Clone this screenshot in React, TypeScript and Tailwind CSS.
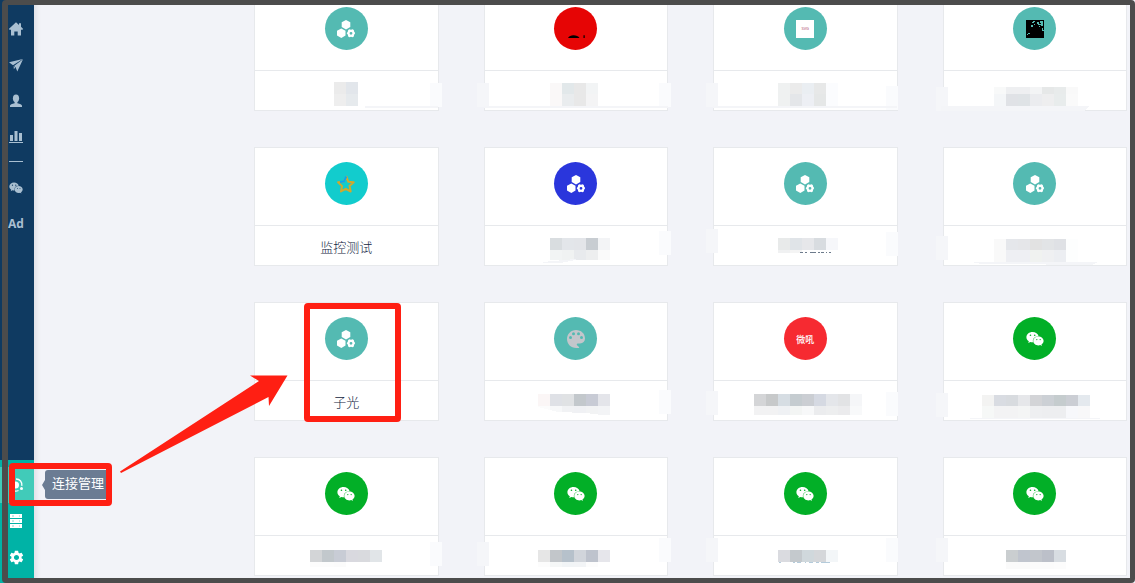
import type { ReactNode } from "react";
import { FaWeixin } from "react-icons/fa";
import { MdSettings } from "react-icons/md";

type Row = { y: number; h: number; cells: string[] };
type Mosaic = { x: number; rows: Row[]; extra?: ReactNode; left?: string; right?: string };
type Connection = { label?: string; color: string; icon: ReactNode; mosaic?: Mosaic; marked?: boolean };

function HexIcon() {
  return (
    <svg width="18" height="18" viewBox="0 0 18 18" fill="#fff">
      <path d="M9 0l4.3 2.3v4.8L9 9.5 4.7 7.1V2.3z" />
      <path d="M4.3 8.5l4.2 2.3v4.8l-4.2 2.3L0 15.6v-4.8z" />
      <path
        fillRule="evenodd"
        d="M12.4 9.2l1.600.6 1.600-.6 1.200.7.3 1.700 1.200 1.600-1.200 1.600-.3 1.800-1.200.7-1.600-.6-1.600.6-1.200-.7-.3-1.800-1.200-1.600 1.200-1.600.3-1.700zM14 11.900a1.400 1.400 0 100 2.800 1.400 1.400 0 000-2.800z"
      />
    </svg>
  );
}

function ArcIcon() {
  return (
    <svg width="18" height="18" viewBox="0 0 18 18">
      <path d="M1 18c1-1.8 3-2.7 5.5-2.7S11.500 16.200 12.500 18z" fill="#000" />
      <path d="M16.500 15.200h1.200V18h-1.200z" fill="#000" />
    </svg>
  );
}

function StarIcon() {
  return (
    <svg width="18" height="18" viewBox="0 0 18 18" fill="none" strokeWidth="2" strokeLinejoin="round">
      <path d="M9.500 1.800l1.700 4.900 5.500.6-4.200 3.600 1.200 5.600-4.900-2.700-4.800 2.600 1-5.300-3.900-3.800 5.400-.6z" stroke="#d3a82c" />
      <path d="M9.300 1.500L6.800 6.600 3 7.100" stroke="#0aa5f5" />
    </svg>
  );
}

function NoiseIcon() {
  return (
    <svg width="18" height="18" viewBox="0 0 18 18" shapeRendering="crispEdges">
      <path d="M0 0h18v18H0z" fill="#000" />
      <path
        d="M6 2h2v1H6zM7 1h2v1H7zM5 5h2v2H5zM8 4h1v1H8zM11 2h2v2h-2zM12 4h3v1h-3zM14 1h3v2h-3zM15 3h2v3h-2zM13 6h1v1h-1zM16 8h1v3h-1zM1 14h1v1H1zM2 13h2v1H2zM17 10h1v1h-1z"
        fill="#54bab2"
      />
    </svg>
  );
}

function PaletteIcon() {
  return (
    <svg width="18" height="18" viewBox="0 0 18 18">
      <path
        d="M9 0C3.900 0 0 4 0 9s3.900 9 9.200 9h3.100c-.2-1.300-1.200-2-2-2.600-.8-.7-.7-1.900.5-2h2.200c3 0 5-1.800 5-4.900C18 3.500 14 0 9 0z"
        fill="#c3c6cb"
      />
      <g fill="#54bab2">
        <circle cx="3.500" cy="7.600" r="1.500" />
        <circle cx="6.500" cy="3.700" r="1.500" />
        <circle cx="11.500" cy="3.700" r="1.500" />
        <circle cx="14.500" cy="7.600" r="1.500" />
      </g>
    </svg>
  );
}

function HomeIcon() {
  return (
    <svg width="16" height="16" viewBox="0 0 16 16" fill="currentColor">
      <path d="M8 1.300l3 2.700V2.200h2v3.600l2.200 2.100-.8.900H13v5.700H9.700v-4H6.300v4H3V8.800H1.600l-.8-.9z" />
    </svg>
  );
}

function PlaneIcon() {
  return (
    <svg width="16" height="16" viewBox="0 0 16 16" fill="currentColor">
      <path d="M1 5.200L14.800 2 5 8.200z" />
      <path d="M15 2.300L9.300 14.600 7.700 10.500 6 9z" />
      <path d="M5.600 9.100l1.500 1.300-1.200 1.800z" />
    </svg>
  );
}

function PersonIcon() {
  return (
    <svg width="16" height="16" viewBox="0 0 16 16" fill="currentColor">
      <ellipse cx="8" cy="5.300" rx="3.100" ry="3.900" />
      <path d="M6.600 8h2.800v2.200c2.600.4 4.600 1.200 4.600 2.600v1.200H2v-1.200c0-1.400 2-2.200 4.600-2.600z" />
    </svg>
  );
}

function ChartIcon() {
  return (
    <svg width="16" height="16" viewBox="0 0 16 16" fill="currentColor">
      <path d="M2 6h3v6H2zM6.500 2h3v10h-3zM11 4h3v8h-3zM1 13h14v1H1z" />
    </svg>
  );
}

function ServerIcon() {
  return (
    <svg width="16" height="16" viewBox="0 0 16 16">
      <path d="M2 1h12v4H2zM2 6h12v4H2zM2 11h12v4H2z" fill="currentColor" />
      <path d="M4 3h2M4 8h2M4 13h2M11 3h1M11 8h1M11 13h1" stroke="#00b3a6" strokeOpacity="0.5" />
    </svg>
  );
}

function ConnectIcon() {
  return (
    <svg width="18" height="18" viewBox="0 0 18 18" fill="none" stroke="currentColor" strokeWidth="1.300">
      <circle cx="8.500" cy="9" r="3.500" fill="currentColor" stroke="none" />
      <path d="M9 3c4 0 6.300 3 5.800 6.800M11.500 14.500c-4 1.800-8.500-.5-8.800-5" />
      <circle cx="14.500" cy="12.500" r="1.500" fill="currentColor" stroke="none" />
    </svg>
  );
}

const hex = <HexIcon />;
const wechat = <FaWeixin size={18} color="#fff" />;

const strip = (x: number, y: number, w: number, h: number) => <rect x={x} y={y} width={w} height={h} fill="#f4f5f8" />;

const connections: Connection[] = [
  {
    color: "bg-[#54bab2]",
    icon: hex,
    mosaic: {
      x: 80,
      rows: [
        { y: 11, h: 12, cells: ["#ebebeb", "#e2e6eb"] },
        { y: 23, h: 12, cells: ["#eeeeee", "#e6eaed"] },
      ],
      extra: strip(111, 35, 73, 2),
      right: "top-[12px] -right-1",
    },
  },
  {
    color: "bg-[#e60505]",
    icon: <ArcIcon />,
    mosaic: {
      x: 66,
      rows: [
        { y: 12, h: 11, cells: ["#faf8f8", "#e2e8ea", "#e8e8e8", "#f2f4f5"] },
        { y: 23, h: 12, cells: ["#faf8f8", "#e9ecee", "#e8e8e8", "#f4f4f5"] },
      ],
      extra: strip(0, 35, 184, 2),
      left: "top-[12px]",
      right: "top-[12px] -right-1",
    },
  },
  {
    color: "bg-[#54bab2]",
    icon: (
      <span className="flex size-[18px] items-center justify-center bg-white text-[4px] leading-none text-[#a83a62]">SVG</span>
    ),
    mosaic: {
      x: 65,
      rows: [
        { y: 12, h: 11, cells: ["#eff1f1", "#ebebeb", "#eaeef2", "#e7e8e8", "#fbfcfe"] },
        { y: 23, h: 12, cells: ["#eff1f1", "#e4e6e9", "#edeff4", "#e5e7e7", "#fbfcfe"] },
      ],
      extra: strip(0, 35, 184, 2),
      left: "top-[12px]",
      right: "top-[15px] -right-px",
    },
  },
  {
    color: "bg-[#54bab2]",
    icon: <NoiseIcon />,
    mosaic: {
      x: 51,
      rows: [
        { y: 16, h: 7, cells: ["#f8f9f9", "#eeeff1", "#eeeff1", "#f3f4f5", "#e6e8e8", "#e8ebeb", "#f9f9f9"] },
        { y: 23, h: 12, cells: ["#f4f6f8", "#e0e2e6", "#dfe3e6", "#ebecef", "#eeeeef", "#e8ecec", "#fafafa"] },
      ],
      extra: <path d="M-2 35h148l-5 5H-2z" fill="#f4f5f8" />,
      left: "top-[16px]",
    },
  },
  { label: "监控测试", color: "bg-[#12cccd]", icon: <StarIcon /> },
  {
    color: "bg-[#2a36dc]",
    icon: hex,
    mosaic: {
      x: 66,
      rows: [
        { y: 12, h: 12, cells: ["#d9dde0", "#e3e6ea", "#e3e5e9", "#c8cdd2", "#f3f4f6"] },
        { y: 24, h: 10, cells: ["#f2f4f4", "#f0f2f2", "#e8eaed", "#edeeef", "#fafafa"] },
      ],
      extra: <path d="M58 36l34-3v1l-16 3H60z" fill="#f4f5f8" />,
      right: "top-[5px] -right-1",
    },
  },
  {
    color: "bg-[#54bab2]",
    icon: hex,
    mosaic: {
      x: 65,
      rows: [
        { y: 12, h: 12, cells: ["#e8eaea", "#e0e4e8", "#e6e7ea", "#d8dce0", "#f6f7fa"] },
        { y: 24, h: 3, cells: ["#f0f1f2", "#f4f4f4"] },
      ],
      extra: <path d="M87 26.500h3m2 0h2m3 0h6m2 0h2m1 0h3m2 0h1m2 0h2" stroke="#6d7b8c" />,
      left: "top-[3px]",
      right: "top-[6px] -right-px",
    },
  },
  {
    color: "bg-[#54bab2]",
    icon: hex,
    mosaic: {
      x: 51,
      rows: [
        { y: 13, h: 11, cells: ["#f9f9f9", "#e5e7eb", "#e5e6e9", "#e2e2e2", "#e2e4e6", "#dfe1e5", "#fdfefe"] },
        { y: 24, h: 12, cells: ["#f9f9f9", "#eeeff3", "#eeeff3", "#f0f2f0", "#eff0f2", "#eceef2", "#fdfefe"] },
      ],
      extra: <path d="M29 36h126l-6 3H115l-25-1H38z" fill="#f4f5f8" />,
      left: "top-[10px]",
    },
  },
  { label: "子光", color: "bg-[#54bab2]", icon: hex, marked: true },
  {
    color: "bg-[#54bab2]",
    icon: <PaletteIcon />,
    mosaic: {
      x: 54,
      rows: [
        { y: 13, h: 12, cells: ["#fbf6f6", "#dfe1e6", "#e0e2e4", "#c3c8cc", "#c8cbd5", "#e4e5ea"] },
        { y: 25, h: 9, cells: ["#fcfcfc", "#f7f8f9", "#f1f2f4", "#f0f1f4", "#f2f3f4", "#f3f4f6"] },
      ],
      extra: <path d="M54 26l20 5 28 1 24 3H54z" fill="#fff" />,
      right: "top-[9px] -right-1",
    },
  },
  {
    color: "bg-[#f62a31]",
    icon: <span className="pt-[2px] text-[9px] leading-none font-medium text-white">微吼</span>,
    mosaic: {
      x: 41,
      rows: [
        { y: 13, h: 12, cells: ["#d4d5d7", "#c7c9ca", "#d6dde3", "#c5ccd0", "#cbced3", "#d5d9e2", "#e4e6ea", "#e2e3e5", "#f5f6f8"] },
        { y: 25, h: 9, cells: ["#f2f2f3", "#f2f2f3", "#eff1f4", "#f3f5f4", "#f7f8f9", "#ebecee", "#edeeef", "#ebebed", "#f8f9fa"] },
      ],
      left: "top-[10px]",
      right: "top-[11px] -right-px",
    },
  },
  {
    color: "bg-[#02af27]",
    icon: wechat,
    mosaic: {
      x: 39,
      rows: [
        { y: 14, h: 11, cells: ["#f3f3f2", "#d9dce2", "#d8dbdf", "#e6e7ea", "#d3d4d7", "#ccd0d5", "#c5ccce", "#cbced4", "#e4e9ee"] },
        { y: 25, h: 12, cells: ["#f6f8f7", "#f3f3f4", "#f3f3f4", "#f4f5f5", "#eeeff1", "#edeef0", "#edeef0", "#f7f8fb", "#f8f8f9"] },
      ],
      extra: strip(27, 37, 130, 1),
      left: "top-[12px]",
    },
  },
  {
    color: "bg-[#02af27]",
    icon: wechat,
    mosaic: {
      x: 56,
      rows: [
        { y: 14, h: 12, cells: ["#d3d5d7", "#c2c8cc", "#c8ccd5", "#d9d9df", "#d9dade", "#e1e5e8"] },
        { y: 26, h: 5, cells: ["#fcfcfc", "#fcfcfc", "#fbfbfb"] },
      ],
      right: "top-[6px] -right-1",
    },
  },
  {
    color: "bg-[#02af27]",
    icon: wechat,
    mosaic: {
      x: 54,
      rows: [
        { y: 14, h: 12, cells: ["#e6e6e6", "#c2c6ca", "#b6c1cb", "#d1d5db", "#bec3cd", "#e6e6eb"] },
        { y: 26, h: 5, cells: ["#fcfcfc", "#f5f7f7", "#f1f4f6", "#f2f4f6", "#fcfcfc"] },
      ],
      left: "top-[6px]",
      right: "top-[2px] -right-1",
    },
  },
  {
    color: "bg-[#02af27]",
    icon: wechat,
    mosaic: {
      x: 65,
      rows: [{ y: 14, h: 12, cells: ["#dadbe0", "#c4c9cd", "#d0d8dc", "#d5d7da", "#f3f6f8"] }],
      extra: <path d="M66 26.500h2m12 0h2m2 0h4m4 0h1m3 0h4m3 0h3m2 0h9" stroke="#b4cbdb" />,
      left: "top-[2px]",
      right: "top-[2px] -right-px",
    },
  },
  {
    color: "bg-[#02af27]",
    icon: wechat,
    mosaic: {
      x: 63,
      rows: [
        { y: 14, h: 12, cells: ["#caced0", "#c0c5ce", "#c2c6cc", "#bcc0c9", "#d8dde2"] },
        { y: 26, h: 7, cells: ["#fafafa", "#fafafa", "#fbfbfb", "#fbfbfb", "#fcfcfc"] },
      ],
      left: "top-[2px]",
    },
  },
];

function MosaicName({ x, rows, extra, left, right }: Mosaic) {
  return (
    <>
      {left && <span className={`absolute -left-2 h-6 w-3 bg-[#f5f6f9] ${left}`} />}
      {right && <span className={`absolute h-6 w-3 bg-[#fafbfd] ${right}`} />}
      <svg className="relative shrink-0 overflow-visible" width="184" height="40" viewBox="0 0 184 40" shapeRendering="crispEdges">
        {rows.map((row) =>
          row.cells.map((fill, i) => (
            <rect key={`${row.y}-${i}`} x={x + i * 12} y={row.y} width="12" height={row.h} fill={fill} />
          )),
        )}
        {extra}
      </svg>
    </>
  );
}

function Card({ label, color, icon, mosaic, marked }: Connection) {
  return (
    <article className="relative flex h-[119px] flex-col border border-[#e7e9ec] bg-white">
      <div className="flex h-[78px] shrink-0 justify-center border-b border-[#e7e9ec] pt-[14px]">
        <div className={`flex size-[43px] items-center justify-center rounded-full ${color}`}>{icon}</div>
      </div>
      <div className="relative flex min-h-0 flex-1 items-start justify-center">
        {mosaic ? (
          <MosaicName {...mosaic} />
        ) : (
          <h2 className="pt-[11px] text-[13px] leading-5 font-light text-[#12263f]">{label}</h2>
        )}
      </div>
      {marked && (
        <div className="pointer-events-none absolute top-0 left-1/2 -ml-[42px] h-[119px] w-[97px] rounded-[4px] border-[6px] border-[#ff1f13]" />
      )}
    </article>
  );
}

function NavItem({ label, children, active }: { label: string; children: ReactNode; active?: boolean }) {
  return (
    <a
      href="#"
      aria-label={label}
      className={`flex h-9 w-full items-center justify-center pr-[2px] ${active ? "bg-[#41cbb9]" : ""}`}
    >
      {children}
    </a>
  );
}

export default function App() {
  return (
    <div className="relative flex h-screen overflow-hidden bg-[#f2f3f8] font-['Open_Sans','Noto_Sans_CJK_SC',sans-serif]">
      <nav className="relative z-10 flex w-[34px] shrink-0 flex-col bg-[#0f3a61] pt-[11px] text-[#a9bfd1] shadow-[1px_0_6px_rgba(60,60,80,0.15)]">
        <NavItem label="首页"><HomeIcon /></NavItem>
        <NavItem label="发送"><PlaneIcon /></NavItem>
        <NavItem label="用户"><PersonIcon /></NavItem>
        <NavItem label="统计"><ChartIcon /></NavItem>
        <hr className="mt-[6px] mb-2 ml-[9px] w-[14px] border-t border-[#a9bfd1]" />
        <NavItem label="微信"><FaWeixin size={14} /></NavItem>
        <NavItem label="广告"><span className="text-[12px] leading-none font-bold">Ad</span></NavItem>
        <div className="relative mt-auto bg-[#00b3a6] py-[7px] pb-2 text-white">
          <NavItem label="连接" active><ConnectIcon /></NavItem>
          <NavItem label="服务器"><ServerIcon /></NavItem>
          <NavItem label="设置"><MdSettings size={17} /></NavItem>
          <div role="tooltip" className="absolute top-[10px] left-[45px] rounded-[3px] bg-[#6b7c93] px-[7px] pt-1 pb-[6px] text-[13px] leading-[19px] whitespace-nowrap">
            <svg className="absolute top-[10px] -left-[3px]" width="3" height="10" viewBox="0 0 3 10">
              <path d="M3 0v10L0 5z" fill="#6b7c93" />
            </svg>
            连接管理
          </div>
          <div className="pointer-events-none absolute top-[3px] left-[9px] h-[43px] w-[103px] rounded-[4px] border-[6px] border-[#ff1f13]" />
          <svg className="pointer-events-none absolute -top-[85px] left-[119px]" width="170" height="100" viewBox="0 0 170 100">
            <path d="M1 96.500L140 6l-9-5.500h37.500L150 31l-.5-9L2 98z" fill="#ff1f13" />
          </svg>
        </div>
      </nav>
      <main className="min-w-0 flex-1 overflow-hidden pr-2 pl-[220px]">
        <div className="-mt-2 grid grid-cols-4 gap-x-[45px] gap-y-9">
          {connections.map((connection, i) => (
            <Card key={i} {...connection} />
          ))}
        </div>
      </main>
      <div className="pointer-events-none absolute inset-y-0 right-0 left-[2px] z-20 rounded-[4px] border-[5px] border-l-[6px] border-[#4c4c4c]" />
    </div>
  );
}
